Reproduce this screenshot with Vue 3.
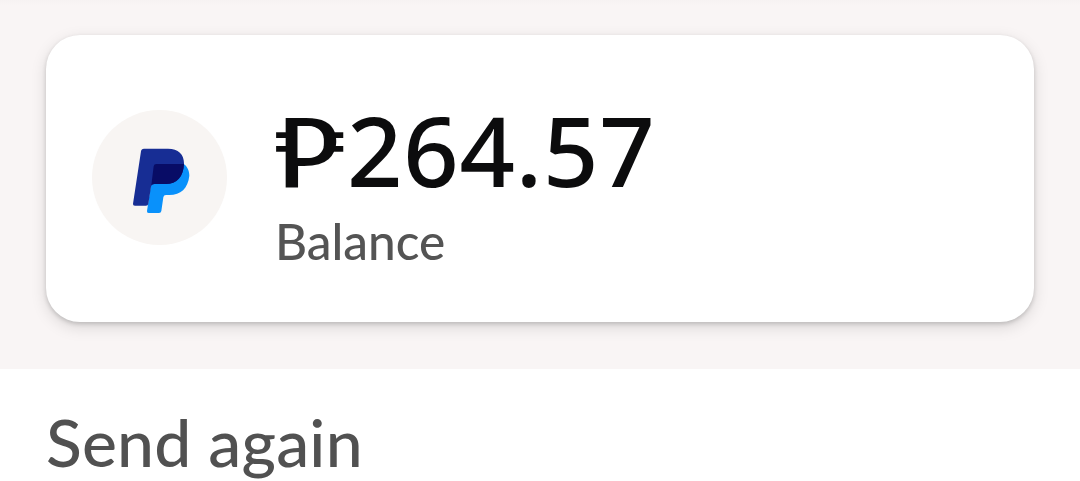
<template>
  <main class="wallet">
    <section class="wallet-top">
      <div class="balance-card">
        <svg class="logo" viewBox="36 30 405 405" aria-hidden="true">
          <circle cx="238.5" cy="232.5" r="202.5" fill="#f8f5f3" />
          <path
            d="M222 192H311C323 200 328 214 328 227C324 265 302 285 268 285H258Q251 285 250 292L244 333Q243 339 237 339H206Q200 339 201 333Z"
            fill="#0991fb"
          />
          <path
            d="M192 146H264C295 146 312 163 312 190C311 230 291 252 258 252H224Q215 252 213 260L205 311Q204 317 198 317H165Q158 317 159 311L183 154Q184 146 192 146Z"
            fill="#172d94"
          />
          <path
            d="M229 192H312C310 230 291 252 258 252H224Q218 252 214 256L221 199Q222 192 229 192Z"
            fill="#080c66"
          />
        </svg>
        <div class="balance">
          <div class="amount">
            <span class="currency">₱</span>
            <span class="value">{{ balance }}</span>
          </div>
          <div class="label">Balance</div>
        </div>
      </div>
    </section>
    <section class="send-again">
      <h2 class="title">Send again</h2>
    </section>
  </main>
</template>

<script setup>
import { ref } from 'vue'

const balance = ref('264.57')
</script>

<style>
body {
  margin: 0;
  overflow: hidden;
}
</style>

<style scoped>
.wallet {
  height: 481px;
  overflow: hidden;
  background: #fff;
  font-family: Lato, 'Noto Sans', sans-serif;
}

.wallet-top {
  box-sizing: border-box;
  height: 369px;
  padding: 35px 46px 0;
  background: linear-gradient(#f6f2f2, #f9f5f5 5px);
}

.balance-card {
  display: flex;
  box-sizing: border-box;
  height: 287px;
  padding: 75px 46px 0;
  border-radius: 34px;
  background: #fff;
  box-shadow: 0 5px 16px rgba(0, 0, 0, 0.13), 0 2px 4px rgba(0, 0, 0, 0.16);
}

.logo {
  flex: none;
  width: 135px;
  height: 135px;
}

.balance {
  margin-left: 48px;
}

.amount {
  display: flex;
  height: 101px;
  color: #0c0c0d;
  font-family: 'Noto Sans', sans-serif;
  font-size: 97px;
  font-weight: 500;
  line-height: 78px;
  white-space: nowrap;
}

.currency {
  position: relative;
  width: 72px;
  transform: scaleX(1.25);
  transform-origin: 0 0;
}

/* the strokes of the peso sign stop at the bowl */
.currency::after {
  content: '';
  position: absolute;
  top: 15.6px;
  left: 18.4px;
  width: 20.8px;
  height: 32px;
  border-radius: 0 12px 12px 0 / 0 13px 13px 0;
  background: #fff;
}

.value {
  letter-spacing: 0.8px;
}

.label {
  color: #545454;
  font-size: 49.5px;
  font-weight: 500;
  line-height: 60px;
}

.send-again {
  padding: 33px 46px 0;
}

.title {
  margin: 0;
  color: #515151;
  font-size: 66px;
  font-weight: 500;
  letter-spacing: 0.2px;
  line-height: 80px;
}
</style>
